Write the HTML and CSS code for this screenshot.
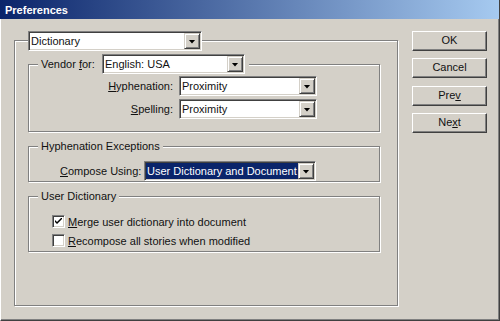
FILE: index.html
```html
<!DOCTYPE html>
<html lang="en">
<head>
  <meta charset="UTF-8">
  <title>Preferences</title>
  <link rel="stylesheet" href="styles.css">
</head>
<body>
  <div class="window">
    <div class="titlebar">Preferences</div>
    <div class="dialog">
      <div class="group outer">
        <div class="combo combo-dict">
          <span class="combo-text">Dictionary</span>
          <span class="drop"></span>
        </div>

        <!-- Vendor -->
        <div class="group inner vendor">
          <div class="legend legend-row">
            <span class="label">Vendor <u>f</u>or:</span>
            <div class="combo combo-vendor">
              <span class="combo-text">English: USA</span>
              <span class="drop"></span>
            </div>
          </div>
          <div class="field-row first">
            <span class="field-label"><u>H</u>yphenation:</span>
            <div class="combo combo-field">
              <span class="combo-text">Proximity</span>
              <span class="drop"></span>
            </div>
          </div>
          <div class="field-row">
            <span class="field-label"><u>S</u>pelling:</span>
            <div class="combo combo-field">
              <span class="combo-text">Proximity</span>
              <span class="drop"></span>
            </div>
          </div>
        </div>

        <!-- Hyphenation exceptions -->
        <div class="group inner exceptions">
          <div class="legend">Hyphenation Exceptions</div>
          <div class="compose-row">
            <span class="compose-label"><u>C</u>ompose Using:</span>
            <div class="combo combo-compose">
              <span class="combo-text selected">User Dictionary and Document</span>
              <span class="drop"></span>
            </div>
          </div>
        </div>

        <!-- User dictionary -->
        <div class="group inner userdict">
          <div class="legend">User Dictionary</div>
          <label class="check-row first">
            <span class="checkbox">
              <svg width="7" height="7" viewBox="0 0 7 7"><path d="M0 2 L0 4 L2 6 L7 1 L7 -1 L2 4 Z" fill="#000"/></svg>
            </span>
            <span><u>M</u>erge user dictionary into document</span>
          </label>
          <label class="check-row">
            <span class="checkbox"></span>
            <span><u>R</u>ecompose all stories when modified</span>
          </label>
        </div>
      </div>

      <div class="buttons">
        <div class="btn">OK</div>
        <div class="btn">Cancel</div>
        <div class="btn btn-gap">Pre<u>v</u></div>
        <div class="btn">Ne<u>x</u>t</div>
      </div>
    </div>
  </div>
</body>
</html>
```

FILE: styles.css
```css
* {
  box-sizing: border-box;
}

body {
  margin: 0;
  background: #d4d0c8;
  font-family: "Liberation Sans", Arial, sans-serif;
  font-size: 11px;
  color: #111;
}

.window {
  width: 500px;
  height: 321px;
  background: #d4d0c8;
  border-left: 1px solid #fff;
  border-right: 1px solid #404040;
  border-bottom: 1px solid #404040;
  box-shadow: inset -1px -1px 0 #808080;
}

.titlebar {
  height: 19px;
  margin-left: -1px;
  padding: 1px 0 0 5px;
  background: linear-gradient(to right, #0a246a, #a6caf0);
  color: #fff;
  font-weight: bold;
  font-size: 11px;
  line-height: 18px;
}

.dialog {
  display: flex;
  align-items: flex-start;
  padding-left: 13px;
}

/* etched group boxes */
.group {
  border: 1px solid #808080;
  box-shadow: inset 1px 1px 0 #fff, 1px 1px 0 #fff;
}

.outer {
  width: 384px;
  height: 266px;
  margin-top: 21px;
}

.inner {
  width: 352px;
  margin-left: 13px;
}

.vendor {
  height: 68px;
  margin-top: 13px;
}

.exceptions {
  height: 36px;
  margin-top: 14px;
}

.userdict {
  height: 56px;
  margin-top: 14px;
}

.legend {
  display: inline-block;
  margin-left: 9px;
  margin-top: -7px;
  padding: 0 3px;
  height: 13px;
  line-height: 13px;
  background: #d4d0c8;
  vertical-align: top;
}

.legend-row {
  display: flex;
  align-items: center;
  width: max-content;
  height: 20px;
  margin-top: -11px;
  padding: 0 4px 0 3px;
}

.legend-row .label {
  width: 61px;
}

/* combo boxes */
.combo {
  display: flex;
  height: 20px;
  padding: 1px;
  background: #fff;
  border-top: 1px solid #808080;
  border-left: 1px solid #808080;
  border-bottom: 1px solid #fff;
  border-right: 1px solid #fff;
  box-shadow: inset 1px 1px 0 #404040, inset -1px -1px 0 #d4d0c8;
}

.combo-text {
  flex: 1;
  height: 16px;
  line-height: 16px;
  padding-left: 1px;
  white-space: nowrap;
  overflow: hidden;
}

.combo-text.selected {
  background: #0a246a;
  color: #fff;
}

.drop {
  width: 16px;
  height: 16px;
  background: #d4d0c8;
  border-top: 1px solid #d4d0c8;
  border-left: 1px solid #d4d0c8;
  border-right: 1px solid #404040;
  border-bottom: 1px solid #404040;
  box-shadow: inset 1px 1px 0 #fff, inset -1px -1px 0 #808080;
  display: flex;
  align-items: center;
  justify-content: center;
}

.drop::after {
  content: "";
  width: 7px;
  height: 4px;
  margin-top: 1px;
  background: #000;
  clip-path: polygon(0 0, 100% 0, 50% 100%);
}

.combo-dict {
  width: 174px;
  margin-left: 13px;
  margin-top: -10px;
}

.combo-vendor {
  width: 143px;
}

.combo-field {
  width: 138px;
}

.combo-compose {
  width: 172px;
}

.field-row {
  display: flex;
  align-items: center;
  margin-top: 3px;
}

.field-row.first {
  margin-top: 2px;
}

.field-label {
  width: 144px;
  text-align: right;
  margin-right: 6px;
}

.compose-row {
  display: flex;
  align-items: center;
  margin-top: 2px;
}

.compose-label {
  width: 84px;
  margin-left: 31px;
}

/* checkboxes */
.check-row {
  display: flex;
  align-items: center;
  height: 15px;
  margin-top: 4px;
  margin-left: 23px;
}

.check-row.first {
  margin-top: 5px;
}

.checkbox {
  width: 13px;
  height: 13px;
  margin-right: 3px;
  background: #fff;
  border-top: 1px solid #808080;
  border-left: 1px solid #808080;
  border-bottom: 1px solid #fff;
  border-right: 1px solid #fff;
  box-shadow: inset 1px 1px 0 #404040, inset -1px -1px 0 #d4d0c8;
  display: flex;
  align-items: center;
  justify-content: center;
}

/* push buttons */
.buttons {
  display: flex;
  flex-direction: column;
  gap: 7px;
  margin-top: 12px;
  margin-left: 14px;
}

.btn {
  width: 75px;
  height: 20px;
  line-height: 17px;
  text-align: center;
  background: #d4d0c8;
  border-top: 1px solid #fff;
  border-left: 1px solid #fff;
  border-right: 1px solid #404040;
  border-bottom: 1px solid #404040;
  box-shadow: inset -1px -1px 0 #808080;
}

.btn-gap {
  margin-top: 1px;
}
```
